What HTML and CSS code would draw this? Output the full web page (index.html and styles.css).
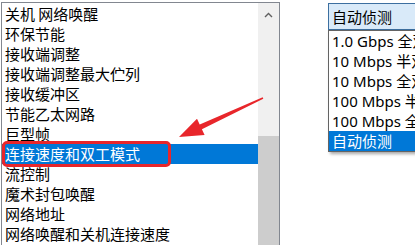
FILE: index.html
```html
<!DOCTYPE html>
<html lang="zh-CN">
<head>
    <meta charset="UTF-8">
    <title>高级属性</title>
    <link rel="stylesheet" href="styles.css">
</head>
<body>

<div class="stage">
    <div class="listbox">
        <div class="items">
            <div class="item">关机 网络唤醒</div>
            <div class="item">环保节能</div>
            <div class="item">接收端调整</div>
            <div class="item">接收端调整最大伫列</div>
            <div class="item">接收缓冲区</div>
            <div class="item">节能乙太网路</div>
            <div class="item">巨型帧</div>
            <div class="item selected">连接速度和双工模式</div>
            <div class="item">流控制</div>
            <div class="item">魔术封包唤醒</div>
            <div class="item">网络地址</div>
            <div class="item">网络唤醒和关机连接速度</div>
        </div>
        <div class="scrollbar">
            <div class="sb-btn">
                <svg width="9" height="6" viewBox="0 0 9 6"><path d="M1 5 L4.5 1.5 L8 5" fill="none" stroke="#606060" stroke-width="1.4"/></svg>
            </div>
            <div class="sb-track"></div>
            <div class="sb-thumb"></div>
        </div>
    </div>

    <div class="combo">
        <div class="combo-value">自动侦测</div>
        <div class="combo-list">
            <div class="opt">1.0 Gbps 全双工</div>
            <div class="opt">10 Mbps 半双工</div>
            <div class="opt">10 Mbps 全双工</div>
            <div class="opt">100 Mbps 半双工</div>
            <div class="opt">100 Mbps 全双工</div>
            <div class="opt selected">自动侦测</div>
        </div>
    </div>

    <!-- annotation -->
    <div class="mark"></div>
    <svg class="arrow" width="415" height="245" viewBox="0 0 415 245">
        <polygon points="179,137 204.6,135.1 201.9,129.2 263.3,98.7 262.7,97.3 199.7,124.6 197,118.7" fill="#e8262b"/>
    </svg>
</div>

</body>
</html>
```

FILE: styles.css
```css
body {
    margin: 0;
    background: #ffffff;
    font-family: "Noto Sans", "Noto Sans CJK SC", sans-serif;
    font-size: 15px;
    color: #000000;
}
.stage {
    position: relative;
    width: 415px;
    height: 245px;
    overflow: hidden;
    display: flex;
    align-items: flex-start;
}
.listbox {
    flex: none;
    margin: 2px 0 0 1px;
    width: 277px;
    height: 260px;
    border: 1px solid #828790;
    display: flex;
}
.items {
    flex: 1;
    padding-top: 1px;
}
.item {
    height: 20px;
    line-height: 20px;
    padding-left: 3px;
    font-family: "Noto Sans CJK SC", sans-serif;
    white-space: nowrap;
}
.item.selected {
    background: #0078d7;
    color: #ffffff;
}
.scrollbar {
    width: 21px;
    background: #f0f0f0;
    display: flex;
    flex-direction: column;
}
.sb-btn {
    height: 24px;
    display: flex;
    align-items: center;
    justify-content: center;
}
.sb-track {
    height: 109px;
}
.sb-thumb {
    flex: 1;
    background: #cdcdcd;
}
.combo {
    flex: none;
    margin: 3px 0 0 48px;
    width: 120px;
}
.combo-value {
    height: 25px;
    line-height: 25px;
    padding-left: 3px;
    background: #d9eaf9;
    border: 1px solid #3c6fa0;
    font-family: "Noto Sans CJK SC", sans-serif;
}
.combo-list {
    border: 1px solid #646464;
    background: #ffffff;
    box-shadow: 2px 2px 3px rgba(0, 0, 0, 0.35);
}
.opt {
    height: 20px;
    line-height: 20px;
    padding-left: 3px;
    white-space: nowrap;
}
.opt.selected {
    background: #0078d7;
    color: #ffffff;
    font-family: "Noto Sans CJK SC", sans-serif;
}
.mark {
    position: absolute;
    left: 2px;
    top: 141px;
    width: 163px;
    height: 20px;
    border: 3px solid #e8262b;
    border-radius: 5px;
}
.arrow {
    position: absolute;
    left: 0;
    top: 0;
}
```
